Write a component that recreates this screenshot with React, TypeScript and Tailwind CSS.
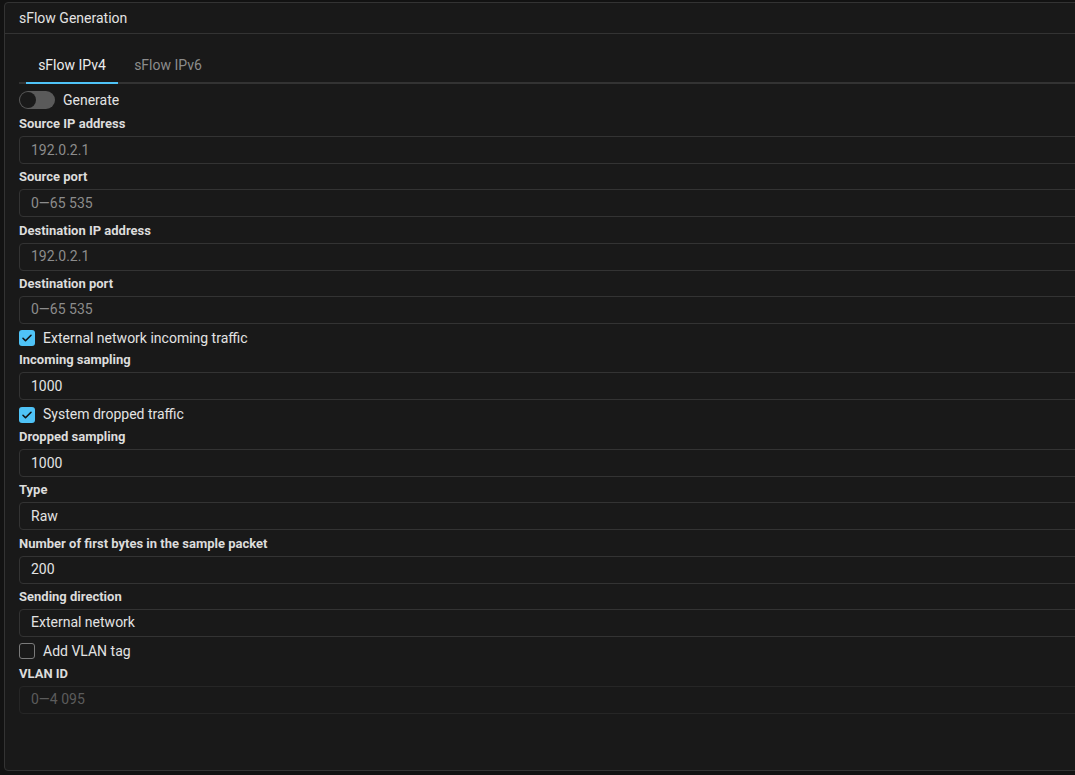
import React, { useState } from "react";

// Field definitions for the sFlow form
interface Field {
  kind: "input" | "check";
  label: string;
  value?: string;
  placeholder?: string;
  checked?: boolean;
  disabled?: boolean;
}

const fields: Field[] = [
  { kind: "input", label: "Source IP address", placeholder: "192.0.2.1" },
  { kind: "input", label: "Source port", placeholder: "0—65 535" },
  { kind: "input", label: "Destination IP address", placeholder: "192.0.2.1" },
  { kind: "input", label: "Destination port", placeholder: "0—65 535" },
  { kind: "check", label: "External network incoming traffic", checked: true },
  { kind: "input", label: "Incoming sampling", value: "1000" },
  { kind: "check", label: "System dropped traffic", checked: true },
  { kind: "input", label: "Dropped sampling", value: "1000" },
  { kind: "input", label: "Type", value: "Raw" },
  { kind: "input", label: "Number of first bytes in the sample packet", value: "200" },
  { kind: "input", label: "Sending direction", value: "External network" },
  { kind: "check", label: "Add VLAN tag", checked: false },
  { kind: "input", label: "VLAN ID", placeholder: "0—4 095", disabled: true },
];

const CheckRow: React.FC<{ label: string; checked?: boolean }> = ({ label, checked }) => (
  <div className="flex items-center h-[18px]">
    {checked ? (
      <span className="w-[16px] h-[16px] rounded-[3px] bg-[#4fc3f7] flex items-center justify-center">
        <svg width="12" height="12" viewBox="0 0 24 24" fill="none">
          <path d="M4 12.5l5 5L20 6.5" stroke="#111" strokeWidth="3.2" strokeLinecap="round" strokeLinejoin="round" />
        </svg>
      </span>
    ) : (
      <span className="w-[16px] h-[16px] rounded-[3px] border-[1.5px] border-[#7a7a7a]" />
    )}
    <span className="ml-[8px] text-[14px] text-[#e3e3e3]">{label}</span>
  </div>
);

const InputRow: React.FC<{ field: Field }> = ({ field }) => (
  <div className="flex flex-col">
    <label className="text-[13px] leading-[16px] font-bold text-[#dcdcdc]">{field.label}</label>
    <div
      className={
        "mt-[4px] h-[28px] rounded-[4px] border flex items-center px-[11px] text-[14px] " +
        (field.disabled ? "border-[#262626]" : "border-[#333333]")
      }
    >
      {field.value ? (
        <span className="text-[#e3e3e3]">{field.value}</span>
      ) : (
        <span className={field.disabled ? "text-[#5c5c5c]" : "text-[#8c8c8c]"}>{field.placeholder}</span>
      )}
    </div>
  </div>
);

const App: React.FC = () => {
  const [tab, setTab] = useState(0);

  return (
    <div
      className="w-[1075px] h-[775px] overflow-hidden bg-[#121212] pl-[4px] pt-[2px]"
      style={{ fontFamily: "Roboto, 'Liberation Sans', sans-serif" }}
    >
      <div className="w-[1100px] h-[769px] bg-[#191919] border border-[#333333] rounded-[4px]">
        {/* Card header */}
        <div className="h-[31px] border-b border-[#333333] flex items-center pl-[14px] text-[14px] text-[#e3e3e3]">
          sFlow Generation
        </div>

        <div className="pl-[14px] pt-[14px]">
          {/* Tabs */}
          <div className="flex border-b-2 border-[#333333] pl-[7px]">
            {["sFlow IPv4", "sFlow IPv6"].map((t, i) => (
              <button
                key={t}
                onClick={() => setTab(i)}
                className={
                  "h-[36px] w-[92px] -mb-[2px] text-[14px] border-b-2 " +
                  (i === 1 ? "ml-[4px] " : "") +
                  (tab === i ? "border-[#4fc3f7] text-[#ececec]" : "border-transparent text-[#8c8c8c]")
                }
              >
                {t}
              </button>
            ))}
          </div>

          {/* Generate toggle */}
          <div className="flex items-center mt-[7px] h-[18px]">
            <span className="w-[36px] h-[18px] rounded-full bg-[#5a5a5a] flex items-center pl-[1px]">
              <span className="w-[16px] h-[16px] rounded-full bg-[#1a1a1a]" />
            </span>
            <span className="ml-[8px] text-[14px] text-[#e3e3e3]">Generate</span>
          </div>

          {/* Form fields */}
          <div className="flex flex-col gap-[5.3px] mt-[7px]">
            {fields.map((f) =>
              f.kind === "check" ? (
                <CheckRow key={f.label} label={f.label} checked={f.checked} />
              ) : (
                <InputRow key={f.label} field={f} />
              )
            )}
          </div>
        </div>
      </div>
    </div>
  );
};

export default App;
